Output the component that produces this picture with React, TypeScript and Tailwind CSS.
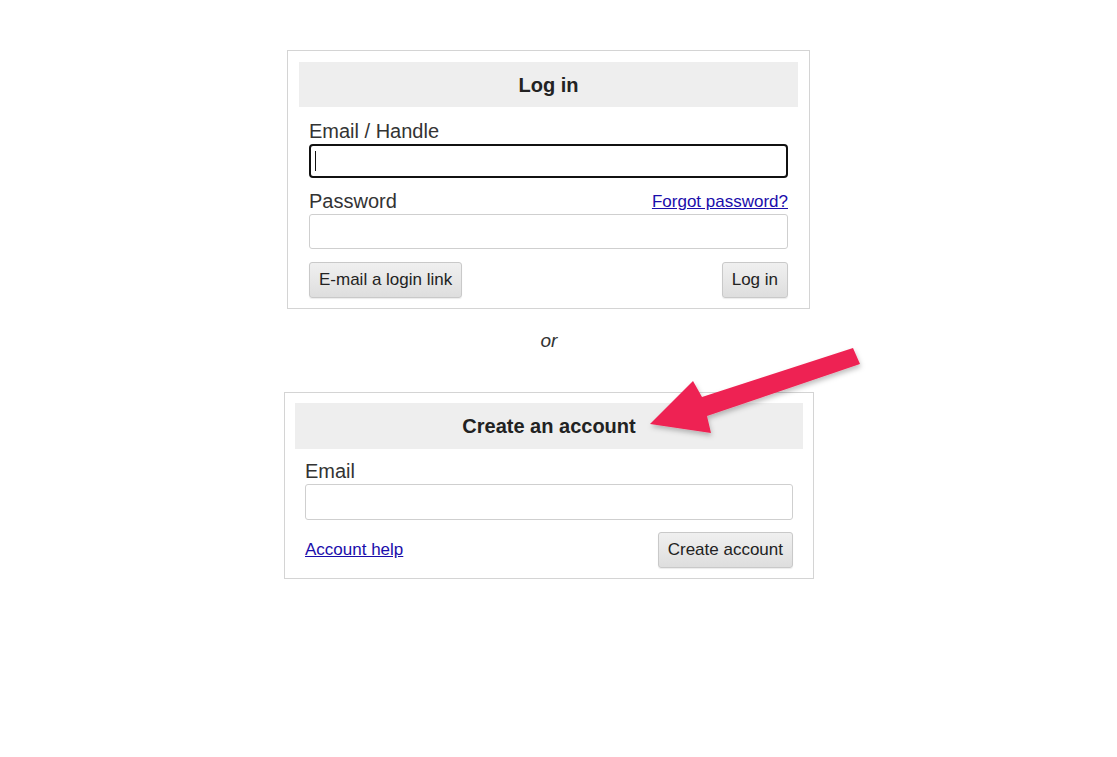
export default function App() {
  const btn =
    "h-[36px] px-[9px] rounded-[3px] border border-[#c9c9c9] bg-gradient-to-b from-[#f0f0f0] to-[#dedede] text-[17px] text-[#222] shadow-[0_1px_1px_rgba(0,0,0,0.08)]";
  const input =
    "block w-full rounded-[3px] border border-[#cfcfcf] bg-white px-2 text-[17px] outline-none";
  const link = "text-[17px] text-[#1a0dab] underline";

  return (
    <div className="relative min-h-[757px] bg-white font-['Liberation_Sans',Arial,sans-serif] text-[#333]">
      <div className="flex w-[1098px] flex-col items-center pt-[50px]">
        {/* Log in */}
        <div className="mr-[1px] w-[523px] border border-[#d4d4d4] px-[11px] pt-[11px] pb-[10px]">
          <div className="flex h-[45px] items-center justify-center bg-[#eeeeee] text-[20px] font-bold text-[#222]">
            Log in
          </div>
          <div className="px-[10px]">
            <label className="mt-[13px] block text-[20px] leading-[23px]">Email / Handle</label>
            <div className="mt-[1px] flex h-[34px] items-center rounded-[4px] border-2 border-[#111] px-[4px]">
              <span className="h-[20px] w-px bg-[#111]" />
            </div>
            <div className="mt-[12px] flex items-end justify-between">
              <label className="text-[20px] leading-[23px]">Password</label>
              <a href="#" className={link + " leading-[21px] mb-[1px]"}>
                Forgot password?
              </a>
            </div>
            <input type="password" className={input + " h-[35px] mt-[1px]"} />
            <div className="mt-[13px] flex items-center justify-between">
              <button className={btn}>E-mail a login link</button>
              <button className={btn}>Log in</button>
            </div>
          </div>
        </div>

        <div className="mt-[21px] mb-[40px] text-[19px] italic leading-[22px] text-[#333]">or</div>

        {/* Create an account */}
        <div className="w-[530px] border border-[#d4d4d4] px-[10px] pt-[10px] pb-[10px]">
          <div className="flex h-[46px] items-center justify-center bg-[#eeeeee] text-[20px] font-bold text-[#222]">
            Create an account
          </div>
          <div className="px-[10px]">
            <label className="mt-[11px] block text-[20px] leading-[23px]">Email</label>
            <input type="email" className={input + " h-[36px] mt-[1px]"} />
            <div className="mt-[12px] flex items-center justify-between">
              <a href="#" className={link}>
                Account help
              </a>
              <button className={btn}>Create account</button>
            </div>
          </div>
        </div>
      </div>

      {/* annotation arrow */}
      <svg
        className="pointer-events-none absolute left-0 top-0"
        width="1117"
        height="757"
        viewBox="0 0 1117 757"
      >
        <defs>
          <filter id="sh" x="-10%" y="-10%" width="120%" height="130%">
            <feDropShadow dx="1" dy="3" stdDeviation="2.5" floodColor="#000" floodOpacity="0.25" />
          </filter>
        </defs>
        <polygon
          filter="url(#sh)"
          fill="#ee2452"
          points="853,348 860,364 707,416 711,433 650,424 693,381 702,397"
        />
      </svg>
    </div>
  );
}
